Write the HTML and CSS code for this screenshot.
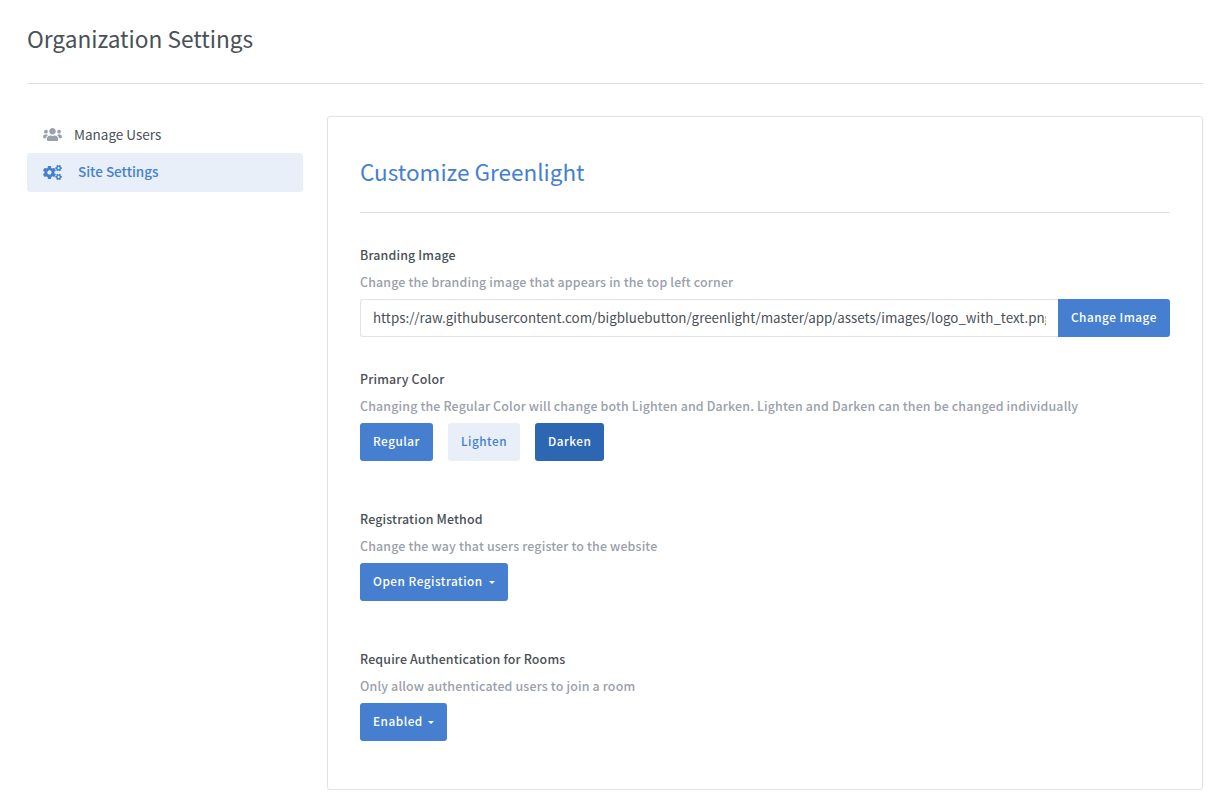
FILE: index.html
```html
<!DOCTYPE html>
<html lang="en">
<head>
<meta charset="utf-8">
<title>Organization Settings</title>
<link rel="stylesheet" href="styles.css">
</head>
<body>
<header class="page-header"><h1 class="page-title">Organization Settings</h1></header>
<main class="layout">
  <nav class="sidebar">
    <a class="nav-item">
      <svg class="nav-icon" viewBox="0 0 640 512"><path d="M96 224c35.300 0 64-28.700 64-64s-28.700-64-64-64-64 28.700-64 64 28.700 64 64 64zm448 0c35.300 0 64-28.700 64-64s-28.700-64-64-64-64 28.700-64 64 28.700 64 64 64zm32 32h-64c-17.600 0-33.500 7.100-45.100 18.600 40.300 22.100 68.900 62 75.100 109.400h66c17.700 0 32-14.300 32-32v-32c0-35.300-28.700-64-64-64zm-256 0c61.900 0 112-50.100 112-112S381.900 32 320 32 208 82.100 208 144s50.100 112 112 112zm76.800 32h-8.300c-20.800 10-43.900 16-68.500 16s-47.600-6-68.500-16h-8.300C179.600 288 128 339.600 128 403.200V432c0 26.500 21.500 48 48 48h288c26.500 0 48-21.500 48-48v-28.800c0-63.600-51.600-115.200-115.200-115.200zm-223.700-13.400C161.500 263.100 145.600 256 128 256H64c-35.300 0-64 28.700-64 64v32c0 17.700 14.300 32 32 32h65.900c6.300-47.400 34.900-87.300 75.200-109.400z"/></svg>
      <span class="nav-label">Manage Users</span>
    </a>
    <a class="nav-item active">
      <svg class="nav-icon" viewBox="0 0 640 512"><path id="small-cog" d="M512.1 191l-8.200 14.300c-3 5.300-9.400 7.500-15.100 5.400-11.800-4.400-22.600-10.700-32.100-18.600-4.600-3.800-5.800-10.500-2.800-15.700l8.200-14.300c-6.900-8-12.300-17.300-15.900-27.400h-16.500c-6 0-11.200-4.300-12.200-10.300-2-12-2.100-24.600 0-37.100 1-6 6.200-10.400 12.200-10.400h16.500c3.600-10.100 9-19.400 15.900-27.400l-8.200-14.300c-3-5.200-1.900-11.900 2.800-15.700 9.500-7.900 20.400-14.200 32.100-18.600 5.700-2.100 12.100.1 15.100 5.400l8.200 14.300c10.500-1.900 21.200-1.900 31.700 0L552 6.300c3-5.300 9.400-7.500 15.100-5.400 11.800 4.400 22.600 10.700 32.100 18.600 4.600 3.800 5.800 10.500 2.800 15.700l-8.200 14.300c6.900 8 12.300 17.300 15.900 27.400h16.500c6 0 11.200 4.300 12.200 10.300 2 12 2.100 24.600 0 37.100-1 6-6.200 10.400-12.200 10.400h-16.500c-3.600 10.100-9 19.400-15.900 27.400l8.200 14.300c3 5.200 1.900 11.900-2.800 15.700-9.500 7.900-20.400 14.200-32.100 18.600-5.700 2.100-12.100-.1-15.100-5.400l-8.200-14.300c-10.400 1.900-21.200 1.900-31.700 0zm-10.500-58.800c38.500 29.600 82.400-14.300 52.800-52.800-38.500-29.700-82.400 14.300-52.800 52.800z"/><use href="#small-cog" y="301"/><path d="M386.300 286.100l33.700 16.800c10.100 5.800 14.500 18.100 10.500 29.100-8.900 24.200-26.400 46.400-42.600 65.800-7.400 8.900-20.200 11.100-30.300 5.300l-29.100-16.800c-16 13.700-34.600 24.600-54.900 31.700v33.600c0 11.600-8.300 21.600-19.700 23.600-24.600 4.200-50.400 4.400-75.900 0-11.500-2-20-11.900-20-23.600V418c-20.300-7.200-38.900-18-54.900-31.700L74 403c-10 5.800-22.900 3.600-30.300-5.300-16.200-19.400-33.300-41.600-42.200-65.700-4-10.900.4-23.200 10.500-29.100l33.300-16.800c-3.900-20.900-3.900-42.400 0-63.400L12 205.800c-10.100-5.800-14.600-18.100-10.500-29 8.900-24.200 26-46.400 42.200-65.800 7.400-8.900 20.200-11.100 30.300-5.300l29.100 16.800c16-13.700 34.600-24.600 54.900-31.700V57.100c0-11.500 8.200-21.500 19.600-23.500 24.600-4.200 50.500-4.400 76-.1 11.500 2 20 11.900 20 23.600v33.600c20.300 7.200 38.900 18 54.900 31.700l29.100-16.800c10-5.800 22.900-3.600 30.300 5.300 16.200 19.400 33.200 41.600 42.100 65.800 4 10.900.1 23.200-10 29.100l-33.700 16.800c3.900 21 3.900 42.500 0 63.500zm-117.600 21.100c59.200-77-28.700-164.900-105.700-105.700-59.200 77 28.700 164.900 105.700 105.700z"/></svg>
      <span class="nav-label">Site Settings</span>
    </a>
  </nav>
  <section class="card">
    <h2 class="card-title">Customize Greenlight</h2>
    <div class="setting branding">
      <label class="name">Branding Image</label>
      <p class="hint">Change the branding image that appears in the top left corner</p>
      <div class="input-group">
        <input class="url" type="text" value="https://raw.githubusercontent.com/bigbluebutton/greenlight/master/app/assets/images/logo_with_text.png">
        <button class="btn btn-change">Change Image</button>
      </div>
    </div>
    <div class="setting">
      <label class="name">Primary Color</label>
      <p class="hint">Changing the Regular Color will change both Lighten and Darken. Lighten and Darken can then be changed individually</p>
      <div class="buttons">
        <button class="btn btn-regular">Regular</button>
        <button class="btn btn-lighten">Lighten</button>
        <button class="btn btn-darken">Darken</button>
      </div>
    </div>
    <div class="setting">
      <label class="name">Registration Method</label>
      <p class="hint">Change the way that users register to the website</p>
      <div class="buttons"><button class="btn btn-registration">Open Registration<i class="caret"></i></button></div>
    </div>
    <div class="setting">
      <label class="name">Require Authentication for Rooms</label>
      <p class="hint">Only allow authenticated users to join a room</p>
      <div class="buttons"><button class="btn btn-enabled">Enabled<i class="caret"></i></button></div>
    </div>
  </section>
</main>
</body>
</html>
```
FILE: styles.css
```css
* { box-sizing: border-box; }
body {
  margin: 0;
  padding: 0 12px 0 27px;
  background: #fff;
  color: #495057;
  font-family: "Noto Sans CJK SC", "Noto Sans", sans-serif;
  font-size: 13.5px;
  overflow: hidden;
}
h1, h2, p { margin: 0; font-weight: 400; }
.page-header { height: 84px; padding-top: 22px; border-bottom: 1px solid #dee2e9; }
.page-title { font-size: 22.65px; line-height: 34px; }
.layout { display: flex; gap: 24px; padding-top: 32px; align-items: flex-start; }
.sidebar { width: 276px; flex: none; }
.nav-item { display: flex; align-items: center; height: 37px; padding-left: 16px; border-radius: 3px; }
.nav-icon { width: 19px; height: 15px; margin-right: 12px; fill: #9aa0ac; }
.nav-label { line-height: 24px; padding-bottom: 2px; }
.nav-item.active { height: 39px; color: #467fcf; background: #e8eff9; font-weight: 500; }
.active .nav-icon { fill: #467fcf; margin-right: 16px; }
.active .nav-label { padding-bottom: 3px; }
.card {
  flex: 1;
  min-width: 0;
  height: 674px;
  padding: 37px 32px 0;
  border: 1px solid #dfe3ea;
  border-radius: 3px;
  box-shadow: 0 1px 2px rgba(0, 0, 0, .05);
}
.card-title { height: 59px; font-size: 22.5px; line-height: 34px; color: #467fcf; border-bottom: 1px solid #dee2e9; margin-bottom: 32px; }
.setting { height: 140px; }
.setting.branding { height: 124px; }
.name,
.hint {
  display: block;
  height: 27px;
  line-height: 20px;
  font-size: 12.4px;
  font-weight: 500;
  letter-spacing: .16px;
  white-space: nowrap;
}
.hint { color: #9aa0ac; }
.input-group { display: flex; }
.url {
  flex: 1;
  min-width: 0;
  height: 38px;
  padding: 0 12px 2px;
  border: 1px solid #dfe3ea;
  border-right: 0;
  border-radius: 3px 0 0 3px;
  color: #495057;
  font-family: inherit;
  font-size: 13.37px;
}
.buttons { display: flex; gap: 15px; }
.btn {
  display: flex;
  align-items: center;
  height: 38px;
  padding: 0 0 3px 13px;
  border: 0;
  border-radius: 3px;
  background: #467fcf;
  color: #fff;
  font-family: inherit;
  font-size: 11.8px;
  font-weight: 500;
  letter-spacing: .5px;
  white-space: nowrap;
}
.btn-change { width: 112px; border-radius: 0 3px 3px 0; }
.btn-regular { width: 73px; }
.btn-lighten { width: 72px; background: #e8eff9; color: #467fcf; }
.btn-darken { width: 69px; background: #2d66b3; }
.btn-registration { width: 148px; }
.btn-enabled { width: 87px; }
.caret { margin: 4px 0 0 6px; border: 3px solid transparent; border-top-color: currentColor; border-bottom: 0; }
.btn-enabled .caret { margin-left: 5px; }
```
